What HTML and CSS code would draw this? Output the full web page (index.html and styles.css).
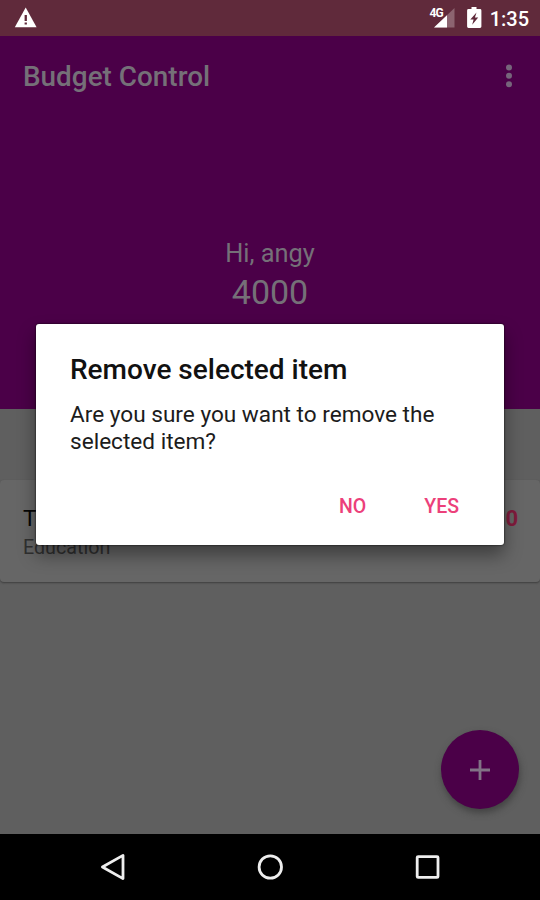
FILE: index.html
```html
<!DOCTYPE html>
<html lang="en">
<head>
<meta charset="utf-8">
<title>Budget Control</title>
<link rel="stylesheet" href="styles.css">
</head>
<body>
<div class="screen">
  <header class="status">
    <svg class="warning" width="24" height="22" viewBox="0 0 24 22"><path fill="#fff" d="M11.7 .6 22.6 20.2H.8z"/><path fill="#602a3b" d="M10.6 8h2.3v6h-2.3zM10.6 15.4h2.3v2.2h-2.3z"/></svg>
    <div class="indicators">
      <span class="network">4G</span>
      <svg class="signal" width="21" height="20" viewBox="0 0 21 20"><path fill="#8c6470" d="M20.5 0v19.5H0z"/><path fill="#fff" d="M13 7.2v12.3H0z"/></svg>
      <svg class="battery" width="15" height="22" viewBox="0 0 15 22"><path fill="#fff" d="M4.5 0h5v2H13a1.4 1.4 0 0 1 1.4 1.4v16.2A1.4 1.4 0 0 1 13 21H1.5A1.4 1.4 0 0 1 .1 19.6V3.4A1.4 1.4 0 0 1 1.5 2h3z"/><path fill="#602a3b" d="M9.5 5.5 3.3 12.6h3.3l-1.4 5.2 6-7.4H7.9z"/></svg>
      <span class="clock">1:35</span>
    </div>
  </header>
  <section class="hero">
    <div class="toolbar">
      <h1>Budget Control</h1>
      <svg class="more" width="8" height="24" viewBox="0 0 8 24" fill="#76657b"><circle cx="4" cy="3.4" r="3"/><circle cx="4" cy="11.8" r="3"/><circle cx="4" cy="20.2" r="3"/></svg>
    </div>
    <p class="greeting">Hi, angy</p>
    <p class="amount">4000</p>
  </section>
  <main class="list">
    <article class="card">
      <div><p class="name">T</p><p class="category">Education</p></div>
      <p class="cost">0</p>
    </article>
  </main>
  <button class="add" aria-label="Add"><svg width="20" height="20" viewBox="0 0 20 20"><path d="M10 0v20M0 10h20" stroke="#827386" stroke-width="2.8"/></svg></button>
  <nav class="navbar">
    <svg width="26" height="28" viewBox="0 0 26 28"><path d="M23 2.4v23.2L2.4 14z"/></svg>
    <svg width="26" height="28" viewBox="0 0 26 28"><circle cx="13.3" cy="14" r="11.2"/></svg>
    <svg width="26" height="28" viewBox="0 0 26 28"><rect x="3.2" y="3.6" width="20.8" height="20.8" rx="1"/></svg>
  </nav>
  <section class="dialog" role="dialog">
    <h2>Remove selected item</h2>
    <p class="message">Are you sure you want to remove the<br>selected item?</p>
    <div class="actions"><button>NO</button><button>YES</button></div>
  </section>
</div>
</body>
</html>
```

FILE: styles.css
```css
* { box-sizing: border-box; }
body, h1, h2, p { margin: 0; }
body { font-family: Roboto, sans-serif; }
svg { display: block; }
button { border: 0; padding: 0; background: none; font: inherit; }
.screen {
  position: relative;
  width: 540px;
  height: 900px;
  overflow: hidden;
  display: flex;
  flex-direction: column;
  background: #5f5f5f;
}
.status {
  height: 36px;
  padding: 7px 11px 0 14px;
  display: flex;
  justify-content: space-between;
  background: #602a3b;
  color: #fff;
}
.indicators { display: flex; }
.network { font-size: 12px; line-height: 13px; font-weight: 700; letter-spacing: -1px; margin-right: -9px; z-index: 1; }
.signal { margin: 1px 12px 0 0; }
.battery { margin-right: 8px; }
.clock { font-size: 20px; line-height: 25px; font-weight: 500; }
.hero {
  height: 373px;
  background: #4b0048;
  color: #757078;
  text-align: center;
}
.toolbar {
  height: 82px;
  padding: 0 27px 0 23px;
  display: flex;
  justify-content: space-between;
  align-items: center;
}
.more { margin-bottom: 3px; }
h1 { font-size: 27.9px; line-height: 32px; font-weight: 500; }
.greeting { margin-top: 120px; font-size: 25.4px; line-height: 30px; }
.amount { margin-top: 4px; font-size: 34px; line-height: 40px; }
.list { flex: 1; padding-top: 71px; }
.card {
  height: 102px;
  padding: 24px 22px 0 23px;
  display: flex;
  justify-content: space-between;
  border-radius: 4px;
  background: #666;
  box-shadow: 0 1px 2px #3d3d3d;
}
.name { font-size: 22.6px; line-height: 30px; color: #050505; }
.category { font-size: 19.7px; line-height: 27px; color: #303030; }
.cost { font-size: 22px; line-height: 30px; font-weight: 700; color: #801b3c; }
.add {
  position: absolute;
  left: 441px;
  top: 730px;
  width: 78px;
  height: 79px;
  border-radius: 50%;
  display: grid;
  place-items: center;
  background: #4b0048;
  box-shadow: 1px 4px 7px #333a;
}
.navbar {
  height: 66px;
  padding: 0 100px;
  display: flex;
  justify-content: space-between;
  align-items: center;
  background: #000;
}
.navbar svg { fill: none; stroke: #eee; stroke-width: 2.8; stroke-linejoin: round; }
.dialog {
  position: absolute;
  left: 36px;
  top: 324px;
  width: 468px;
  height: 221px;
  padding: 28px 34px 0;
  border-radius: 3px;
  background: #fff;
  box-shadow: 0 0 2px #000, 0 10px 18px #0006;
}
h2 { font-size: 28px; line-height: 36px; font-weight: 500; color: #111; }
.message { margin-top: 13px; font-size: 22.6px; line-height: 27px; color: #1c1c1c; }
.actions {
  margin-top: 38px;
  padding-right: 11px;
  display: flex;
  justify-content: flex-end;
  gap: 58px;
}
.actions button { font-size: 19.5px; line-height: 28px; font-weight: 500; color: #ec407a; }
```
